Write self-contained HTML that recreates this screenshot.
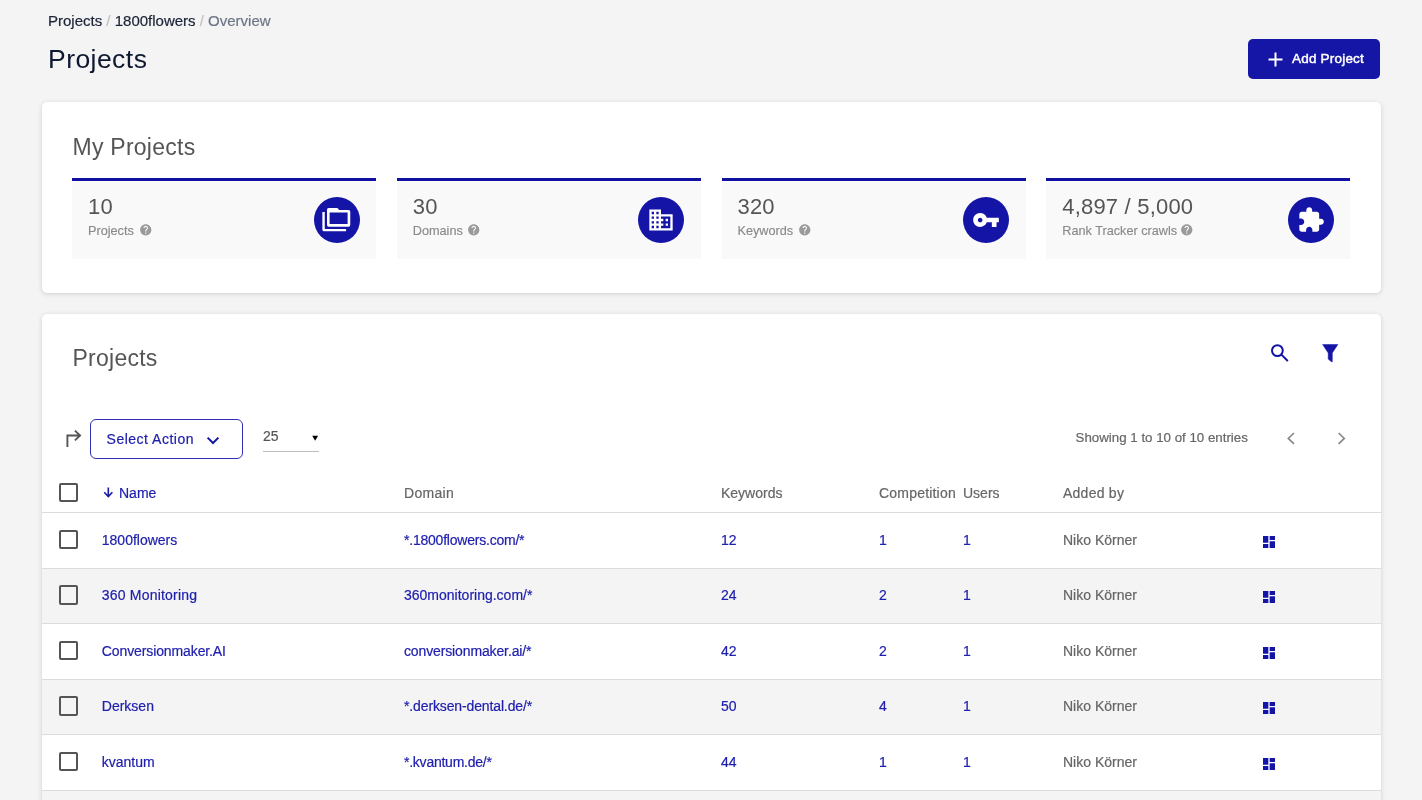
<!DOCTYPE html>
<html><head><meta charset="utf-8">
<style>
*{margin:0;padding:0;box-sizing:border-box}
html,body{width:1422px;height:800px;overflow:hidden;will-change:transform;background:#f4f4f4;font-family:"Liberation Sans",sans-serif}
.a{position:absolute;white-space:nowrap;line-height:1}
.blue{color:#2020ae}
.card{position:absolute;left:42px;width:1339px;background:#fff;border-radius:5px;box-shadow:0 1px 5px rgba(0,0,0,.15)}
.tile{position:absolute;top:76px;width:304px;height:80.5px;background:linear-gradient(#fff 0,#fff 1.5px,#f9f9f9 1.5px);border-top:3px solid #1010a3}
.num{position:absolute;left:16px;top:14.8px;font-size:22px;letter-spacing:0.2px;color:#555;line-height:1}
.lbl{position:absolute;left:16px;font-size:12.7px;color:#8a8a8a;line-height:1;-webkit-text-stroke:0.15px currentColor}
.q{position:absolute;top:42.075px;width:13.5px;height:13.5px}
.circ{position:absolute;right:16.4px;top:16px;width:46px;height:46px;border-radius:50%;background:#1414a6}
.circ svg{position:absolute;left:9px;top:9px;width:28px;height:28px}
.cb{position:absolute;width:19.2px;height:19.2px;border:2px solid #555;border-radius:2px;background:transparent}
.row{position:absolute;left:0;width:1339px;height:55.5px;border-bottom:1px solid #dcdcdc}
.row.g{background:#f4f4f4}
.cell{position:absolute;font-size:14px;line-height:1;white-space:nowrap;-webkit-text-stroke:0.2px currentColor}
.st{-webkit-text-stroke:0.2px currentColor}
</style></head><body>

<!-- breadcrumb -->
<div class="a st" style="left:48px;top:13.3px;font-size:15px;color:#1b2236">Projects <span style="color:#c2c2c2">/</span> 1800flowers <span style="color:#c2c2c2">/</span> <span style="color:#6d7486">Overview</span></div>
<div class="a" style="left:48px;top:45.6px;font-size:26.5px;letter-spacing:0.45px;color:#0e1830">Projects</div>

<!-- add project button -->
<div style="position:absolute;left:1248px;top:39px;width:132px;height:40px;background:#1616a6;border-radius:5px"></div>
<svg style="position:absolute;left:1268px;top:52px" width="15" height="15" viewBox="0 0 15 15"><path d="M7.5 0.5v14M0.5 7.5h14" stroke="#fff" stroke-width="2" fill="none"/></svg>
<div class="a" style="left:1292px;top:51.6px;font-size:13.5px;letter-spacing:0.2px;-webkit-text-stroke:0.45px #fff;color:#fff">Add Project</div>

<!-- card 1 -->
<div class="card" style="top:102px;height:191px">
  <div class="a" style="left:30.5px;top:34px;font-size:23px;letter-spacing:0.25px;color:#555">My Projects</div>

  <div class="tile" style="left:30px">
    <div class="num">10</div>
    <div class="lbl" style="top:44px">Projects</div>
    <svg class="q" style="left:66.975px" width="14" height="14" viewBox="0 0 24 24"><path fill="#9a9a9a" d="M12 2C6.48 2 2 6.48 2 12s4.48 10 10 10 10-4.48 10-10S17.52 2 12 2zm1 17h-2v-2h2v2zm2.07-7.75l-.9.92C13.45 12.9 13 13.5 13 15h-2v-.5c0-1.1.45-2.1 1.170-2.83l1.24-1.26c.37-.36.59-.86.59-1.41 0-1.1-.9-2-2-2s-2 .9-2 2H8c0-2.21 1.79-4 4-4s4 1.79 4 4c0 .88-.36 1.68-.93 2.25z"/></svg>
    <div class="circ"><svg style="left:0;top:0;width:46px;height:46px" viewBox="0 0 46 46"><path fill="#fff" fill-rule="evenodd" d="M8.35 15.1H10.75V32H32.1V34.26H10.2Q8.35 34.26 8.35 32.4Z M14.6 11H23.4L25.2 12.9H34.6Q36.26 12.9 36.26 14.6V28.1Q36.26 29.76 34.6 29.76H14.7Q13 29.76 13 28.1V12.6Q13 11 14.6 11Z M15.6 15.5V27.1H33.6V15.5Z"/></svg></div>
  </div>

  <div class="tile" style="left:354.75px">
    <div class="num">30</div>
    <div class="lbl" style="top:44px">Domains</div>
    <svg class="q" style="left:70.725px" width="14" height="14" viewBox="0 0 24 24"><path fill="#9a9a9a" d="M12 2C6.48 2 2 6.48 2 12s4.48 10 10 10 10-4.48 10-10S17.52 2 12 2zm1 17h-2v-2h2v2zm2.07-7.75l-.9.92C13.45 12.9 13 13.5 13 15h-2v-.5c0-1.1.45-2.1 1.170-2.83l1.240-1.26c.37-.36.59-.86.59-1.41 0-1.1-.9-2-2-2s-2 .9-2 2H8c0-2.21 1.79-4 4-4s4 1.79 4 4c0 .88-.36 1.68-.93 2.25z"/></svg>
    <div class="circ"><svg viewBox="0 0 24 24"><path fill="#fff" d="M12 7V3H2v18h20V7H10zM6 19H4v-2h2v2zm0-4H4v-2h2v2zm0-4H4V9h2v2zm0-4H4V5h2v2zm4 12H8v-2h2v2zm0-4H8v-2h2v2zm0-4H8V9h2v2zm0-4H8V5h2v2zm10 12h-8v-2h2v-2h-2v-2h2v-2h-2V9h8v10zm-2-8h-2v2h2v-2zm0 4h-2v2h2v-2z"/></svg></div>
  </div>

  <div class="tile" style="left:679.5px">
    <div class="num">320</div>
    <div class="lbl" style="top:44px">Keywords</div>
    <svg class="q" style="left:76.275px" width="14" height="14" viewBox="0 0 24 24"><path fill="#9a9a9a" d="M12 2C6.48 2 2 6.48 2 12s4.48 10 10 10 10-4.48 10-10S17.52 2 12 2zm1 17h-2v-2h2v2zm2.07-7.75l-.9.92C13.45 12.9 13 13.5 13 15h-2v-.5c0-1.1.45-2.1 1.170-2.83l1.240-1.26c.37-.36.59-.86.59-1.41 0-1.1-.9-2-2-2s-2 .9-2 2H8c0-2.21 1.79-4 4-4s4 1.79 4 4c0 .88-.36 1.68-.93 2.25z"/></svg>
    <div class="circ"><svg viewBox="0 0 24 24"><path fill="#fff" d="M12.65 10C11.83 7.67 9.61 6 7 6c-3.31 0-6 2.690-6 6s2.69 6 6 6c2.61 0 4.83-1.67 5.65-4H17v4h4v-4h2v-4H12.65zM7 14c-1.1 0-2-.9-2-2s.9-2 2-2 2 .9 2 2-.9 2-2 2z"/></svg></div>
  </div>

  <div class="tile" style="left:1004.25px">
    <div class="num">4,897 / 5,000</div>
    <div class="lbl" style="top:44px">Rank Tracker crawls</div>
    <svg class="q" style="left:134.025px" width="14" height="14" viewBox="0 0 24 24"><path fill="#9a9a9a" d="M12 2C6.48 2 2 6.48 2 12s4.48 10 10 10 10-4.48 10-10S17.52 2 12 2zm1 17h-2v-2h2v2zm2.07-7.75l-.9.92C13.45 12.9 13 13.5 13 15h-2v-.5c0-1.1.45-2.1 1.170-2.83l1.240-1.26c.37-.36.59-.86.59-1.41 0-1.1-.9-2-2-2s-2 .9-2 2H8c0-2.21 1.79-4 4-4s4 1.79 4 4c0 .88-.36 1.68-.93 2.25z"/></svg>
    <div class="circ"><svg viewBox="0 0 24 24"><path fill="#fff" d="M20.5 11H19V7c0-1.1-.9-2-2-2h-4V3.5C13 2.12 11.88 1 10.5 1S8 2.12 8 3.5V5H4c-1.1 0-1.99.9-1.99 2v3.8H3.5c1.49 0 2.7 1.21 2.7 2.7s-1.21 2.7-2.7 2.7H2V20c0 1.1.9 2 2 2h3.8v-1.5c0-1.49 1.21-2.7 2.7-2.7 1.49 0 2.7 1.21 2.7 2.7V22H17c1.1 0 2-.9 2-2v-4h1.5c1.38 0 2.5-1.12 2.5-2.5S21.88 11 20.5 11z"/></svg></div>
  </div>
</div>

<!-- card 2 -->
<div class="card" id="c2" style="top:314px;height:520px;overflow:hidden">
  <div class="a" style="left:30.5px;top:33.4px;font-size:23px;letter-spacing:0.25px;color:#555">Projects</div>
  <svg style="position:absolute;left:1226px;top:28px" width="22" height="22" viewBox="0 0 22 22"><circle cx="9.4" cy="8.6" r="5.4" fill="none" stroke="#1414a6" stroke-width="2"/><path d="M13.4 12.6L19.3 18.5" stroke="#1414a6" stroke-width="2" stroke-linecap="round"/></svg>
  <svg style="position:absolute;left:1276px;top:28px" width="22" height="22" viewBox="1318 342 22 22"><path d="M1322.6 344.5L1337.9 344.5L1332.3 352.9L1332.3 361.7L1331.4 361.8L1328.2 359.1L1328.2 352.9Z" fill="#1414a6" stroke="#1414a6" stroke-width="0.5" stroke-linejoin="round"/></svg>
  <svg style="position:absolute;left:20px;top:114px" width="20" height="20" viewBox="62 428 20 20"><path d="M67.4 447V435.5H80M74.9 430.6L80.1 435.5L74.9 440.4" fill="none" stroke="#555" stroke-width="1.9"/></svg>
  <div style="position:absolute;left:47.6px;top:105px;width:153px;height:40px;border:1.5px solid #2f2fb5;border-radius:6px"></div>
  <div class="a blue st" style="left:64.6px;top:118.35px;font-size:14px;letter-spacing:0.5px">Select Action</div>
  <svg style="position:absolute;left:162px;top:118px" width="16" height="16" viewBox="204 432 16 16"><path d="M207.6 437.6L213 443L218.4 437.6" fill="none" stroke="#1414a6" stroke-width="2"/></svg>
  <div class="a st" style="left:221px;top:115.45px;font-size:14px;color:#555">25</div>
  <svg style="position:absolute;left:268px;top:118px" width="10" height="10" viewBox="310 432 10 10"><path d="M312.2 435.8H318.1L315.15 440.8Z" fill="#000"/></svg>
  <div style="position:absolute;left:221px;top:137px;width:56px;height:1px;background:#bdbdbd"></div>
  <div class="a st" style="left:1033.6px;top:116.97px;font-size:13.3px;color:#666">Showing 1 to 10 of 10 entries</div>
  <svg style="position:absolute;left:1242px;top:116px" width="110" height="16" viewBox="1284 430 110 16"><path d="M1294 433L1288.3 438.4L1294 443.8M1338.6 433L1344.3 438.4L1338.6 443.8" fill="none" stroke="#8a8a8a" stroke-width="1.7"/></svg>
  <div class="cb" style="left:17px;top:168.7px"></div>
  <svg style="position:absolute;left:58px;top:172px" width="16" height="16" viewBox="100 486 16 16"><path d="M108.3 487.5V496.6M104.2 492.3L108.3 496.5L112.4 492.3" fill="none" stroke="#1a1aa8" stroke-width="1.6"/></svg>
  <div class="cell blue" style="left:77px;top:171.95px">Name</div>
  <div class="cell" style="left:362px;top:171.95px;color:#666;letter-spacing:0.3px">Domain</div>
  <div class="cell" style="left:679px;top:171.95px;color:#666">Keywords</div>
  <div class="cell" style="left:837px;top:171.95px;color:#666;letter-spacing:0.2px">Competition</div>
  <div class="cell" style="left:921px;top:171.95px;color:#666">Users</div>
  <div class="cell" style="left:1021px;top:171.95px;color:#666;letter-spacing:0.25px">Added by</div>
  <div style="position:absolute;left:0;top:198.4px;width:1339px;height:1px;background:#dcdcdc"></div>
  <div class="row" style="top:199.40px">
    <div class="cb" style="left:17px;top:16.6px"></div>
    <div class="cell blue" style="left:59.8px;top:19.4px">1800flowers</div>
    <div class="cell blue" style="left:362px;top:19.4px;letter-spacing:-0.22px">*.1800flowers.com/*</div>
    <div class="cell blue" style="left:679px;top:19.4px">12</div>
    <div class="cell blue" style="left:837px;top:19.4px">1</div>
    <div class="cell blue" style="left:921px;top:19.4px">1</div>
    <div class="cell" style="left:1021px;top:19.4px;color:#666">Niko Körner</div>
    <svg style="position:absolute;left:1218.75px;top:20.3px" width="16" height="16" viewBox="0 0 24 24"><path fill="#1414a6" d="M3 13h8V3H3v10zm0 8h8v-6H3v6zm10 0h8V11h-8v10zm0-18v6h8V3h-8z"/></svg>
  </div>
  <div class="row g" style="top:254.90px">
    <div class="cb" style="left:17px;top:16.6px"></div>
    <div class="cell blue" style="left:59.8px;top:19.4px;letter-spacing:0.2px">360 Monitoring</div>
    <div class="cell blue" style="left:362px;top:19.4px">360monitoring.com/*</div>
    <div class="cell blue" style="left:679px;top:19.4px">24</div>
    <div class="cell blue" style="left:837px;top:19.4px">2</div>
    <div class="cell blue" style="left:921px;top:19.4px">1</div>
    <div class="cell" style="left:1021px;top:19.4px;color:#666">Niko Körner</div>
    <svg style="position:absolute;left:1218.75px;top:20.3px" width="16" height="16" viewBox="0 0 24 24"><path fill="#1414a6" d="M3 13h8V3H3v10zm0 8h8v-6H3v6zm10 0h8V11h-8v10zm0-18v6h8V3h-8z"/></svg>
  </div>
  <div class="row" style="top:310.40px">
    <div class="cb" style="left:17px;top:16.6px"></div>
    <div class="cell blue" style="left:59.8px;top:19.4px;letter-spacing:-0.11px">Conversionmaker.AI</div>
    <div class="cell blue" style="left:362px;top:19.4px;letter-spacing:-0.13px">conversionmaker.ai/*</div>
    <div class="cell blue" style="left:679px;top:19.4px">42</div>
    <div class="cell blue" style="left:837px;top:19.4px">2</div>
    <div class="cell blue" style="left:921px;top:19.4px">1</div>
    <div class="cell" style="left:1021px;top:19.4px;color:#666">Niko Körner</div>
    <svg style="position:absolute;left:1218.75px;top:20.3px" width="16" height="16" viewBox="0 0 24 24"><path fill="#1414a6" d="M3 13h8V3H3v10zm0 8h8v-6H3v6zm10 0h8V11h-8v10zm0-18v6h8V3h-8z"/></svg>
  </div>
  <div class="row g" style="top:365.90px">
    <div class="cb" style="left:17px;top:16.6px"></div>
    <div class="cell blue" style="left:59.8px;top:19.4px">Derksen</div>
    <div class="cell blue" style="left:362px;top:19.4px;letter-spacing:-0.13px">*.derksen-dental.de/*</div>
    <div class="cell blue" style="left:679px;top:19.4px">50</div>
    <div class="cell blue" style="left:837px;top:19.4px">4</div>
    <div class="cell blue" style="left:921px;top:19.4px">1</div>
    <div class="cell" style="left:1021px;top:19.4px;color:#666">Niko Körner</div>
    <svg style="position:absolute;left:1218.75px;top:20.3px" width="16" height="16" viewBox="0 0 24 24"><path fill="#1414a6" d="M3 13h8V3H3v10zm0 8h8v-6H3v6zm10 0h8V11h-8v10zm0-18v6h8V3h-8z"/></svg>
  </div>
  <div class="row" style="top:421.40px">
    <div class="cb" style="left:17px;top:16.6px"></div>
    <div class="cell blue" style="left:59.8px;top:19.4px">kvantum</div>
    <div class="cell blue" style="left:362px;top:19.4px;letter-spacing:-0.24px">*.kvantum.de/*</div>
    <div class="cell blue" style="left:679px;top:19.4px">44</div>
    <div class="cell blue" style="left:837px;top:19.4px">1</div>
    <div class="cell blue" style="left:921px;top:19.4px">1</div>
    <div class="cell" style="left:1021px;top:19.4px;color:#666">Niko Körner</div>
    <svg style="position:absolute;left:1218.75px;top:20.3px" width="16" height="16" viewBox="0 0 24 24"><path fill="#1414a6" d="M3 13h8V3H3v10zm0 8h8v-6H3v6zm10 0h8V11h-8v10zm0-18v6h8V3h-8z"/></svg>
  </div>
  <div class="row g" style="top:476.90px"></div>
</div>

</body></html>
